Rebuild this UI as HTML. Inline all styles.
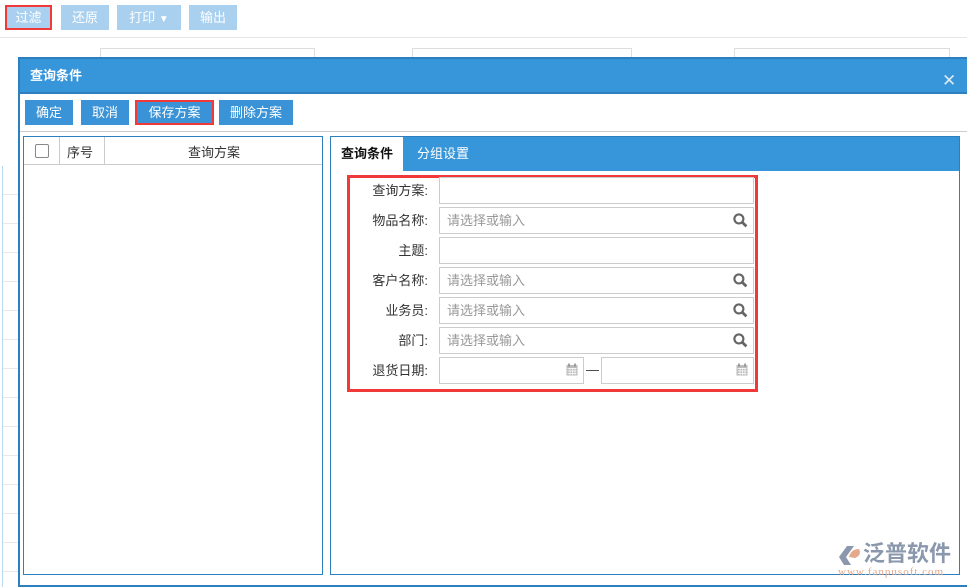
<!DOCTYPE html>
<html><head><meta charset="utf-8"><style>
*{box-sizing:border-box;margin:0;padding:0}
body{width:967px;height:587px;overflow:hidden;background:#fff;font-family:"Liberation Sans","Noto Sans CJK SC",sans-serif;font-size:13px;position:relative;color:#333}
.a{position:absolute}
.tb{background:#a9d0ee;color:#fff;text-align:center;line-height:25px;height:25px;font-size:13px}
.btn{background:#3a93d6;color:#fff;text-align:center;line-height:25px;height:25px;top:100px}
.lbl{text-align:right;width:90px;left:338px;line-height:27px;font-size:13px;color:#333}
.inp{left:439px;width:315px;height:27px;border:1px solid #ccc;background:#fff;color:#999;padding-left:7px;line-height:25px}
.srch{position:absolute;right:5px;top:5px}
</style></head><body>
<div class="a tb" style="left:5px;top:5px;width:47px;border:2px solid #f03a3a;line-height:21px">过滤</div>
<div class="a tb" style="left:61px;top:5px;width:48px">还原</div>
<div class="a tb" style="left:117px;top:5px;width:64px">打印 <span style="font-size:10px">▼</span></div>
<div class="a tb" style="left:189px;top:5px;width:48px">输出</div>
<div class="a" style="left:0;top:37px;width:967px;height:1px;background:#e5e5e5"></div>
<div class="a" style="left:100px;top:48px;width:215px;height:12px;border:1px solid #ddd"></div>
<div class="a" style="left:412px;top:48px;width:220px;height:12px;border:1px solid #ddd"></div>
<div class="a" style="left:734px;top:48px;width:216px;height:12px;border:1px solid #ddd"></div>
<div class="a" style="left:2px;top:166px;width:16px;height:421px;border-left:1px solid #b8d8f0;background:repeating-linear-gradient(#fff 0 28px,#e8e8e8 28px 29px)"></div>
<!-- dialog -->
<div class="a" style="left:18px;top:57px;width:960px;height:530px;border:2px solid #2e7fbd;background:#fff">
 <div style="height:35px;background:#3795d9;border-bottom:2px solid #2e7fbd;color:#fff;font-weight:bold;line-height:33px;padding-left:10px;font-size:13px">查询条件<span style="position:absolute;left:922px;top:5px;font-weight:normal;font-size:17px;color:#dbeaf7">✕</span></div>
</div>
<div class="a" style="left:20px;top:131px;width:947px;height:1px;background:#ccc"></div>
<div class="a btn" style="left:25px;width:48px">确定</div>
<div class="a btn" style="left:81px;width:48px">取消</div>
<div class="a btn" style="left:135px;width:79px;border:2px solid #f03a3a;line-height:21px">保存方案</div>
<div class="a btn" style="left:219px;width:74px">删除方案</div>
<!-- left panel -->
<div class="a" style="left:23px;top:136px;width:300px;height:439px;border:1px solid #2e7fbd"></div>
<div class="a" style="left:24px;top:137px;width:298px;height:28px;border-bottom:1px solid #ccc"></div>
<div class="a" style="left:59px;top:137px;width:1px;height:28px;background:#ccc"></div>
<div class="a" style="left:104px;top:137px;width:1px;height:28px;background:#ccc"></div>
<div class="a" style="left:35px;top:144px;width:14px;height:14px;border:1px solid #888;border-radius:2px"></div>
<div class="a" style="left:67px;top:142px">序号</div>
<div class="a" style="left:188px;top:142px">查询方案</div>
<!-- right panel -->
<div class="a" style="left:330px;top:136px;width:630px;height:439px;border:1px solid #2e7fbd"></div>
<div class="a" style="left:331px;top:137px;width:628px;height:34px;background:#3795d9"></div>
<div class="a" style="left:331px;top:137px;width:72px;height:35px;background:#fff;font-weight:bold;line-height:33px;text-align:center;color:#111">查询条件</div>
<div class="a" style="left:417px;top:137px;line-height:33px;color:#fff">分组设置</div>
<div class="a" style="left:347px;top:175px;width:411px;height:217px;border:3px solid #f03a3a"></div>
<div class="a lbl" style="top:177px">查询方案:</div>
<div class="a lbl" style="top:207px">物品名称:</div>
<div class="a lbl" style="top:237px">主题:</div>
<div class="a lbl" style="top:267px">客户名称:</div>
<div class="a lbl" style="top:297px">业务员:</div>
<div class="a lbl" style="top:327px">部门:</div>
<div class="a lbl" style="top:357px">退货日期:</div>
<div class="a inp" style="top:177px"></div>
<div class="a inp" style="top:207px">请选择或输入<svg class="srch" width="15" height="15" viewBox="0 0 14 14"><circle cx="5.5" cy="5.5" r="4.2" fill="none" stroke="#666" stroke-width="2"/><path d="M8.5 8.5L12.5 12.5" stroke="#666" stroke-width="2.6"/></svg></div>
<div class="a inp" style="top:237px"></div>
<div class="a inp" style="top:267px">请选择或输入<svg class="srch" width="15" height="15" viewBox="0 0 14 14"><circle cx="5.5" cy="5.5" r="4.2" fill="none" stroke="#666" stroke-width="2"/><path d="M8.5 8.5L12.5 12.5" stroke="#666" stroke-width="2.6"/></svg></div>
<div class="a inp" style="top:297px">请选择或输入<svg class="srch" width="15" height="15" viewBox="0 0 14 14"><circle cx="5.5" cy="5.5" r="4.2" fill="none" stroke="#666" stroke-width="2"/><path d="M8.5 8.5L12.5 12.5" stroke="#666" stroke-width="2.6"/></svg></div>
<div class="a inp" style="top:327px">请选择或输入<svg class="srch" width="15" height="15" viewBox="0 0 14 14"><circle cx="5.5" cy="5.5" r="4.2" fill="none" stroke="#666" stroke-width="2"/><path d="M8.5 8.5L12.5 12.5" stroke="#666" stroke-width="2.6"/></svg></div>
<div class="a inp" style="top:357px;width:145px"><svg class="srch" width="12" height="13" viewBox="0 0 12 13"><rect x="0.5" y="2" width="11" height="10.5" fill="#bbb"/><path d="M3 0.5v3M9 0.5v3" stroke="#888" stroke-width="1.5"/><path d="M1.5 5.5h9M1.5 8h9M1.5 10.5h9M4 5v7M6.5 5v7M9 5v7" stroke="#fff" stroke-width="0.7"/></svg></div>
<div class="a" style="left:586px;top:362px">—</div>
<div class="a inp" style="top:357px;left:601px;width:153px"><svg class="srch" width="12" height="13" viewBox="0 0 12 13"><rect x="0.5" y="2" width="11" height="10.5" fill="#bbb"/><path d="M3 0.5v3M9 0.5v3" stroke="#888" stroke-width="1.5"/><path d="M1.5 5.5h9M1.5 8h9M1.5 10.5h9M4 5v7M6.5 5v7M9 5v7" stroke="#fff" stroke-width="0.7"/></svg></div>
<!-- logo -->
<svg class="a" style="left:837px;top:544px" width="26" height="22" viewBox="0 0 26 22"><path d="M2 13L10 2H17L9 13L14 21H7Z" fill="#8a97ac"/><path d="M12 13Q14 5 22 5Q25 11 18 14Z" fill="#e4a88a"/></svg>
<div class="a" style="left:863px;top:541px;font-size:22px;line-height:26px;color:#8a97ac;font-weight:bold;letter-spacing:0">泛普软件</div>
<div class="a" style="left:838px;top:566px;font-size:11px;line-height:12px;color:#e4a88a;font-family:'Liberation Serif',serif;letter-spacing:1px">www.fanpusoft.com</div>
</body></html>
